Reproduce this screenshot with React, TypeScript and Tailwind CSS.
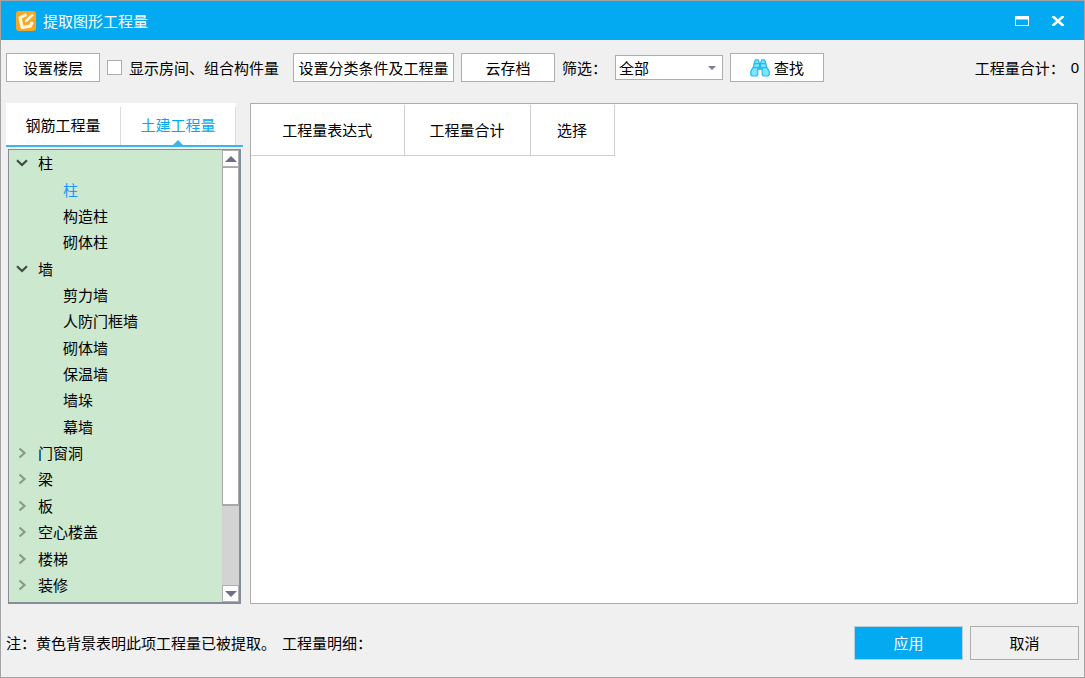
import { useState } from "react";
import clsx from "clsx";

const tabs = ["钢筋工程量", "土建工程量"];

const tree = [
  { name: "柱", children: ["柱", "构造柱", "砌体柱"] },
  {
    name: "墙",
    children: ["剪力墙", "人防门框墙", "砌体墙", "保温墙", "墙垛", "幕墙"]
  },
  { name: "门窗洞", children: [] },
  { name: "梁", children: [] },
  { name: "板", children: [] },
  { name: "空心楼盖", children: [] },
  { name: "楼梯", children: [] },
  { name: "装修", children: [] }
];

const columns = [
  { name: "工程量表达式", width: "w-[153px]" },
  { name: "工程量合计", width: "w-[126px]" },
  { name: "选择", width: "w-[84px]" }
];

const AppIcon = () => (
  <svg viewBox="0 0 20 20" className="size-5" aria-hidden="true">
    <rect width="20" height="20" rx="3" fill="#f7a823" />
    <path
      d="M10.5 3.6 4 6.6l2.2 9.8 8.2-1.2 1.8-4.4"
      fill="none"
      stroke="#fff4de"
      strokeWidth="3.2"
      strokeLinejoin="round"
    />
    <path d="m8.4 11.8.8-3.2L16 2.4l2 2-6.6 6.6z" fill="#fffaf0" stroke="#f2a531" strokeWidth=".7" />
  </svg>
);

const Binoculars = () => (
  <svg viewBox="0 0 20 18" className="w-5 h-[18px]" aria-hidden="true">
    <g fill="#7fe3ff" stroke="#1fbdf2" strokeWidth="1.2" strokeLinejoin="round">
      <path d="M5.5.8h2.6l1.4 3.4v6H3.2l.8-5.4z" />
      <path d="M14.5.8h-2.6l-1.4 3.4v6h6.3L16 4.8z" />
      <path d="M3 8.6h4.8v7L6.6 17H2L.8 15.6v-3.2z" />
      <path d="M17 8.6h-4.8v7l1.2 1.4H18l1.2-1.4v-3.2z" />
    </g>
    <path d="M4 4.6h5M11 4.6h5M8 8.8h4" stroke="#1fbdf2" strokeWidth="1.4" />
  </svg>
);

const Chevron = ({ open }: { open: boolean }) => (
  <svg
    viewBox="0 0 12 12"
    className={clsx("size-3", open ? "text-[#414b43]" : "text-[#8b998d]")}
    fill="none"
    stroke="currentColor"
    strokeWidth="2.2"
    aria-hidden="true"
  >
    <path d={open ? "M1 3.2 6 8l5-4.8" : "M3.5 1.5 8.5 6l-5 4.5"} />
  </svg>
);

const ScrollArrow = ({ down }: { down?: boolean }) => (
  <button
    aria-label={down ? "向下滚动" : "向上滚动"}
    className="h-[17px] shrink-0 flex items-center justify-center bg-white border border-[#b0b0b0]"
  >
    <svg viewBox="0 0 12 6" className="w-3 h-[6px]" fill="#6b7082">
      <path d={down ? "M0 0h12L6 6z" : "M0 6h12L6 0z"} />
    </svg>
  </button>
);

const boxButton =
  "h-[29px] flex items-center justify-center bg-white border border-[#adadad] whitespace-nowrap";

const TitleBar = () => (
  <header className="h-[39px] shrink-0 flex items-center bg-[#03a9f1] pl-[15px] pr-[19px] text-white">
    <AppIcon />
    <h1 className="ml-[7px]">提取图形工程量</h1>
    <div className="ml-auto flex items-center gap-[22px]">
      <button aria-label="最大化">
        <svg viewBox="0 0 14 10" className="w-[14px] h-[10px]">
          <path d="M0 0h14v10H0zM1 3.5V9h12V3.5z" fill="#fff" fillRule="evenodd" />
        </svg>
      </button>
      <button aria-label="关闭">
        <svg viewBox="0 0 14 10" className="w-[14px] h-[10px]">
          <path d="M1.5 0 12.5 10M12.5 0 1.5 10" stroke="#fff" strokeWidth="2.6" />
        </svg>
      </button>
    </div>
  </header>
);

const Toolbar = () => (
  <div className="flex items-center px-[5px] pt-[13px] pb-[21px]">
    <button className={clsx(boxButton, "w-[94px]")}>设置楼层</button>
    <label className="ml-[7px] flex items-center gap-[7px] whitespace-nowrap">
      <input
        type="checkbox"
        className="appearance-none size-[15px] bg-white border border-[#adadad] checked:bg-[#03a9f1]"
      />
      显示房间、组合构件量
    </label>
    <button className={clsx(boxButton, "ml-[14px] w-[161px]")}>
      设置分类条件及工程量
    </button>
    <button className={clsx(boxButton, "ml-[7px] w-[94px]")}>云存档</button>
    <label htmlFor="filter" className="ml-[7px] whitespace-nowrap">
      筛选：
    </label>
    <div className="relative ml-2 w-[108px]">
      <select
        id="filter"
        className="block appearance-none w-full h-[25px] pl-[3px] bg-white border border-[#adadad]"
      >
        <option>全部</option>
      </select>
      <svg
        viewBox="0 0 8 4"
        className="absolute right-[7px] top-[11px] w-2 h-1 pointer-events-none"
        fill="#7d7f8e"
      >
        <path d="M0 0h8L4 4z" />
      </svg>
    </div>
    <button className={clsx(boxButton, "ml-[7px] w-[94px] gap-1")}>
      <Binoculars />
      查找
    </button>
    <div className="ml-auto flex gap-[6px] whitespace-nowrap">
      <span>工程量合计：</span>
      <output className="font-['Liberation_Sans']">0</output>
    </div>
  </div>
);

const Sidebar = () => {
  const [tab, setTab] = useState(tabs[1]);
  const [open, setOpen] = useState(["柱", "墙"]);
  const [selected, setSelected] = useState("柱");

  const toggle = (name: string) =>
    setOpen(open.includes(name) ? open.filter((n) => n !== name) : [...open, name]);

  return (
    <aside className="w-[237px] shrink-0 flex flex-col">
      <div role="tablist" className="flex mr-[7px] pt-1 bg-white">
        {tabs.map((name) => (
          <button
            key={name}
            role="tab"
            aria-selected={tab === name}
            onClick={() => setTab(name)}
            className={clsx(
              "relative flex-1 h-[38px] pb-[2px] border-r border-[#dcdcdc]",
              tab === name && "text-[#03a9f1]"
            )}
          >
            {name}
            {tab === name && (
              <svg
                viewBox="0 0 10 5"
                className="absolute bottom-0 inset-x-0 mx-auto w-[10px] h-[5px]"
                fill="#3db5e6"
              >
                <path d="M0 5h10L5 0z" />
              </svg>
            )}
          </button>
        ))}
      </div>
      <div className="h-[2px] bg-[#3db5e6]" />

      <div className="flex-1 flex mt-[2px] mx-[2px] border-2 border-[#868c98] border-l border-t bg-[#cce8cf]">
        <ul role="tree" className="flex-1 flex flex-col pb-1">
          {tree.map((group) => (
            <li
              key={group.name}
              role="treeitem"
              aria-expanded={open.includes(group.name)}
              className="contents"
            >
              <button
                onClick={() => toggle(group.name)}
                className="grow min-h-[26px] flex items-center pl-[7px] gap-[10px] text-left"
              >
                <Chevron open={open.includes(group.name)} />
                {group.name}
              </button>
              {open.includes(group.name) &&
                group.children.map((child) => (
                  <button
                    key={child}
                    onClick={() => setSelected(child)}
                    className={clsx(
                      "grow min-h-[26px] pl-[54px] text-left",
                      selected === child && "text-[#1e96ff]"
                    )}
                  >
                    {child}
                  </button>
                ))}
            </li>
          ))}
        </ul>
        <div className="w-[17px] flex flex-col bg-[#d3d3d3]">
          <ScrollArrow />
          <div className="basis-[81%] bg-white border border-b-2 border-[#a9a9a9]" />
          <div className="basis-[19%]" />
          <ScrollArrow down />
        </div>
      </div>
    </aside>
  );
};

const Results = () => (
  <main className="flex-1 bg-white border border-[#adadad] pt-px">
    <table className="table-fixed border-collapse w-[363px]">
      <thead>
        <tr>
          {columns.map((col) => (
            <th
              key={col.name}
              className={clsx(
                "h-[50px] p-0 font-normal border-r border-b border-[#cfcfcf]",
                col.width
              )}
            >
              {col.name}
            </th>
          ))}
        </tr>
      </thead>
    </table>
  </main>
);

const Footer = () => (
  <footer className="flex items-center px-[5px] pt-[22px] pb-[17px]">
    <p className="flex gap-[6px]">
      <span>注：黄色背景表明此项工程量已被提取。</span>
      <span>工程量明细：</span>
    </p>
    <div className="ml-auto flex gap-[7px]">
      <button className="w-[109px] h-[34px] bg-[#03a9f1] border border-[#b9cfdb] text-white">
        应用
      </button>
      <button className="w-[109px] h-[34px] border border-[#adadad]">取消</button>
    </div>
  </footer>
);

export default function App() {
  return (
    <div
      lang="zh-CN"
      className="min-h-screen flex flex-col bg-[#f0f0f0] border border-[#a3a3a3] text-[15px] leading-5 text-black font-['Noto_Sans_CJK_SC',sans-serif]"
    >
      <TitleBar />
      <Toolbar />
      <div className="flex-1 flex gap-[7px] pl-[5px] pr-[6px]">
        <Sidebar />
        <Results />
      </div>
      <Footer />
    </div>
  );
}
